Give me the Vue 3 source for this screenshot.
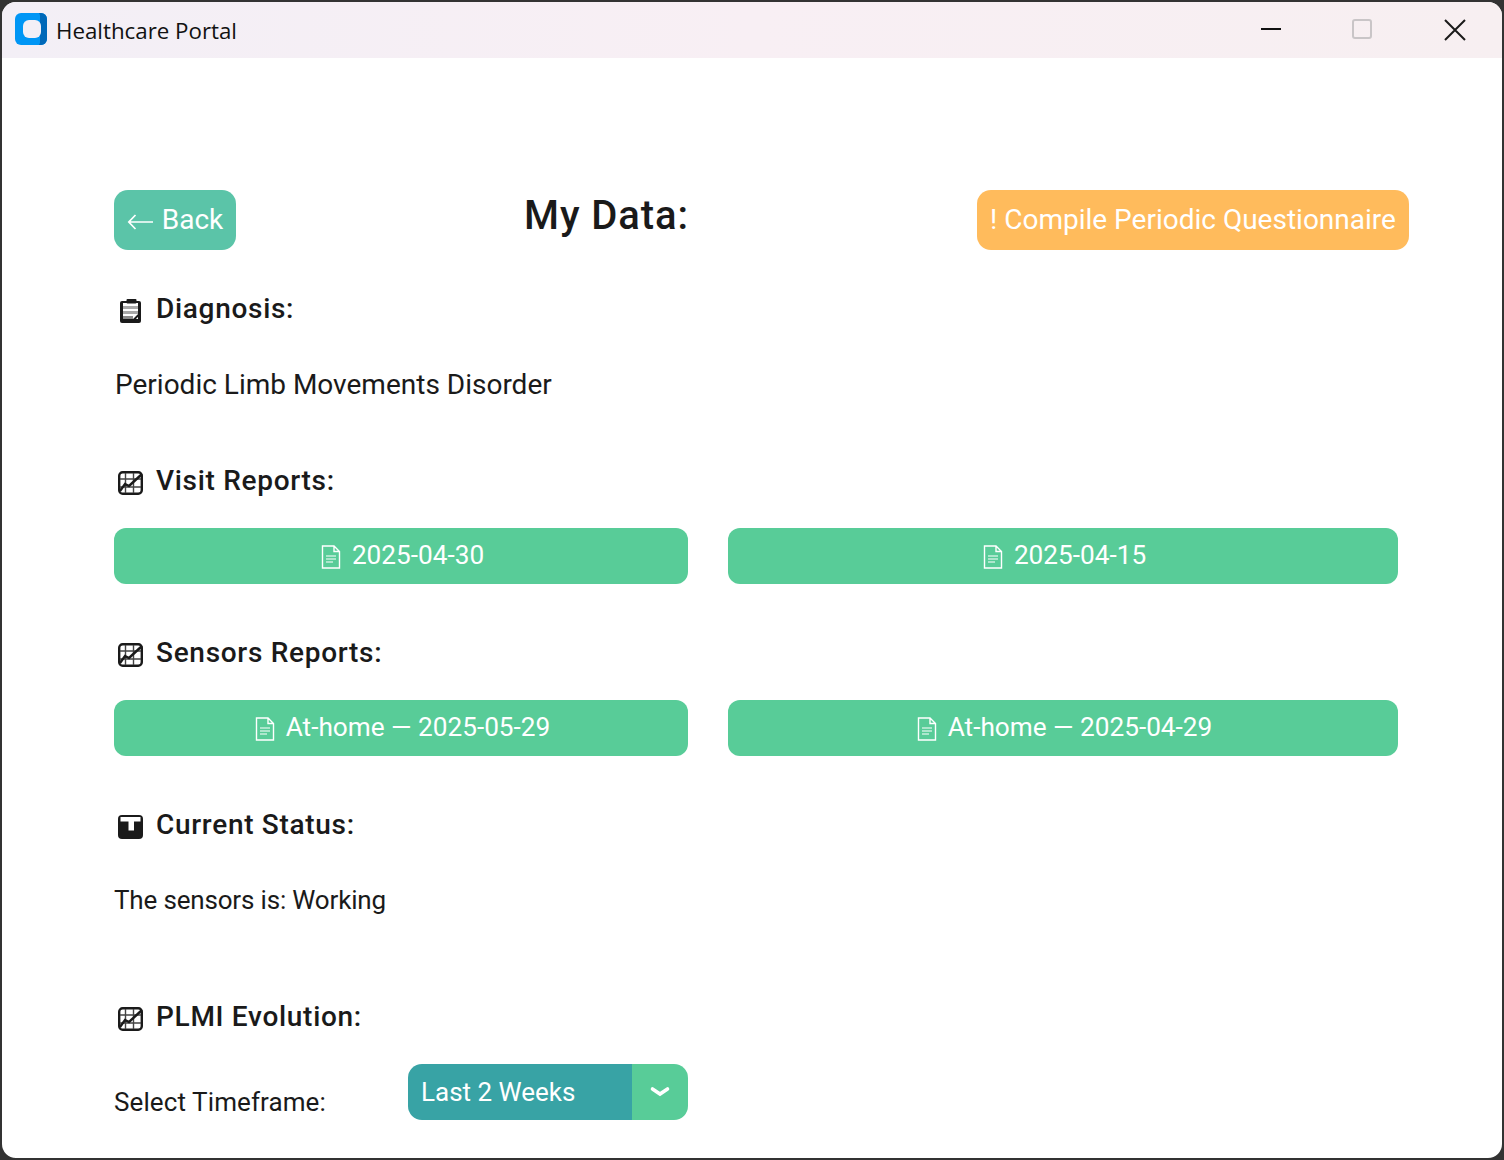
<template>
  <div class="window">
    <div class="titlebar">
      <svg class="logo" width="32" height="32" viewBox="0 0 32 32">
        <rect width="32" height="32" rx="6" fill="#0096f5" />
        <path d="M24 0h2a6 6 0 0 1 6 6v20a6 6 0 0 1-6 6h-2a5 5 0 0 0 1-4V4a5 5 0 0 0-1-4z" fill="#0068b8" />
        <rect x="8" y="7" width="18" height="18" rx="6" fill="#f3eff6" />
      </svg>
      <span class="app-name">Healthcare Portal</span>
      <div class="controls">
        <svg class="ctl-min" width="20" height="20" viewBox="0 0 20 20"><path d="M0 9h20" stroke="#111" stroke-width="2" /></svg>
        <svg class="ctl-max" width="20" height="20" viewBox="0 0 20 20"><rect x="1" y="1" width="18" height="18" rx="2" fill="none" stroke="#c9c5c7" stroke-width="2" /></svg>
        <svg class="ctl-close" width="22" height="22" viewBox="0 0 22 22"><path d="M1 1l20 20M21 1L1 21" stroke="#1a1a1a" stroke-width="2" /></svg>
      </div>
    </div>

    <main class="page">
      <header class="top">
        <button class="back">
          <svg class="arrow" width="26" height="16" viewBox="0 0 26 16"><path d="M26 8H2M8.5 1L1.8 8l6.7 7" fill="none" stroke="#fff" stroke-width="1.7" /></svg>
          Back
        </button>
        <h1>My Data:</h1>
        <button class="compile">! Compile Periodic Questionnaire</button>
      </header>

      <h2 class="first">
        <svg class="icon" viewBox="0 0 25 24">
          <rect x="2" y="2" width="21" height="22" rx="2" fill="#1a1a1a" />
          <rect x="5" y="4" width="15" height="16" fill="#fff" />
          <rect x="5" y="7" width="15" height="3" fill="#a8a8a8" />
          <rect x="5" y="12" width="15" height="3" fill="#a8a8a8" />
          <rect x="5" y="17" width="10" height="3" fill="#8a8a8a" />
          <rect x="8.5" y="0" width="10" height="4.5" rx="1" fill="#1a1a1a" />
          <path d="M15.5 21l5-5" stroke="#1a1a1a" stroke-width="2" />
        </svg>
        Diagnosis:
      </h2>
      <p class="diag">Periodic Limb Movements Disorder</p>

      <h2 class="visit">
        <svg class="icon" viewBox="0 0 25 24">
          <rect x="1.2" y="1.2" width="22.6" height="21.6" rx="3.5" fill="none" stroke="#1a1a1a" stroke-width="2.4" />
          <path d="M7.5 2v20M15.5 2v20M2 8h21M2 16h21" stroke="#444" stroke-width="1.4" />
          <path d="M2 20l5-7 4 2L24 3" fill="none" stroke="#1a1a1a" stroke-width="2.4" />
        </svg>
        Visit Reports:
      </h2>
      <div class="reports">
        <button v-for="r in visits" :key="r" class="report">
          <svg class="doc" viewBox="0 0 20 24"><path d="M1.5 1h11.5l5.5 5.5V23H1.5zM13 1v5.5h5.5" fill="none" stroke="#fff" stroke-width="1.4" /><path d="M5 11h10M5 14h10M5 17h7" stroke="#fff" stroke-width="1.2" /></svg>
          {{ r }}
        </button>
      </div>

      <h2 class="next">
        <svg class="icon" viewBox="0 0 25 24">
          <rect x="1.2" y="1.2" width="22.6" height="21.6" rx="3.5" fill="none" stroke="#1a1a1a" stroke-width="2.4" />
          <path d="M7.5 2v20M15.5 2v20M2 8h21M2 16h21" stroke="#444" stroke-width="1.4" />
          <path d="M2 20l5-7 4 2L24 3" fill="none" stroke="#1a1a1a" stroke-width="2.4" />
        </svg>
        Sensors Reports:
      </h2>
      <div class="reports">
        <button v-for="r in sensors" :key="r" class="report">
          <svg class="doc" viewBox="0 0 20 24"><path d="M1.5 1h11.5l5.5 5.5V23H1.5zM13 1v5.5h5.5" fill="none" stroke="#fff" stroke-width="1.4" /><path d="M5 11h10M5 14h10M5 17h7" stroke="#fff" stroke-width="1.2" /></svg>
          {{ r }}
        </button>
      </div>

      <h2 class="next">
        <svg class="icon" viewBox="0 0 25 24">
          <rect x="0" y="0" width="25" height="24" rx="4" fill="#1a1a1a" />
          <path d="M2.5 2h20v4.5h-6.5v9h-5.500v-9H2.500z" fill="#fff" />
        </svg>
        Current Status:
      </h2>
      <p class="status">The sensors is: Working</p>

      <h2 class="plmi">
        <svg class="icon" viewBox="0 0 25 24">
          <rect x="1.2" y="1.2" width="22.6" height="21.6" rx="3.5" fill="none" stroke="#1a1a1a" stroke-width="2.4" />
          <path d="M7.5 2v20M15.5 2v20M2 8h21M2 16h21" stroke="#444" stroke-width="1.4" />
          <path d="M2 20l5-7 4 2L24 3" fill="none" stroke="#1a1a1a" stroke-width="2.4" />
        </svg>
        PLMI Evolution:
      </h2>
      <div class="timeframe">
        <label>Select Timeframe:</label>
        <div class="select">
          <span class="value">Last 2 Weeks</span>
          <span class="caret">
            <svg width="20" height="12" viewBox="0 0 20 12"><path d="M2.5 3L10 8 17.5 3" fill="none" stroke="#fff" stroke-width="3.6" stroke-linecap="round" /></svg>
          </span>
        </div>
      </div>
    </main>
  </div>
</template>

<script setup>
const visits = ['2025-04-30', '2025-04-15'];
const sensors = ['At-home — 2025-05-29', 'At-home — 2025-04-29'];
</script>

<style>
html, body {
  margin: 0;
  background: #333;
}
</style>

<style scoped>
* {
  box-sizing: border-box;
}
.window {
  width: 1504px;
  height: 1160px;
  border: 2px solid #333;
  border-radius: 16px;
  background: #fff;
  overflow: hidden;
  font-family: Roboto, "Liberation Sans", sans-serif;
  color: #1a1a1a;
}
.titlebar {
  height: 56px;
  display: flex;
  align-items: center;
  background: linear-gradient(90deg, #f3eff6 0%, #f8eff4 50%, #f7eff1 100%);
}
.logo {
  margin: -2px 0 0 13px;
}
.app-name {
  margin-left: 9px;
  font-family: "Open Sans", "Noto Sans", sans-serif;
  font-size: 22.3px;
  color: #111;
}
.controls {
  margin-left: auto;
  display: flex;
  align-items: center;
}
.ctl-min {
  margin-right: 71px;
}
.ctl-max {
  margin: -2px 72px 0 0;
}
.ctl-close {
  margin-right: 36px;
}
.page {
  padding: 132px 93px 0 112px;
}
.top {
  height: 60px;
  display: flex;
  justify-content: space-between;
  align-items: flex-start;
}
button {
  border: 0;
  color: #fff;
  font-family: inherit;
  font-size: 28px;
  padding: 0 0 2px;
}
.back {
  width: 122px;
  height: 60px;
  border-radius: 14px;
  background: #5bc4a8;
  display: flex;
  align-items: center;
  justify-content: center;
  gap: 9px;
}
.arrow {
  margin-top: 6px;
}
.compile {
  width: 432px;
  height: 60px;
  border-radius: 14px;
  background: #ffbb5c;
}
h1 {
  margin: 0;
  font-size: 40px;
  line-height: 52px;
  font-weight: 500;
  letter-spacing: 0.9px;
}
h2 {
  margin: 0;
  height: 40px;
  display: flex;
  align-items: center;
  font-size: 28px;
  font-weight: 500;
  letter-spacing: 0.7px;
}
.icon {
  width: 25px;
  height: 24px;
  margin: 6px 13px 0 4px;
  flex: none;
}
.first {
  margin-top: 38px;
}
.visit {
  margin-top: 56px;
}
.next {
  margin-top: 48px;
}
.plmi {
  margin-top: 76px;
}
p {
  margin: 37px 0 0;
  height: 39px;
  line-height: 40px;
  font-size: 28px;
}
.diag {
  padding-left: 1px;
}
.status {
  font-size: 26px;
  line-height: 38px;
  letter-spacing: -0.17px;
}
.reports {
  margin-top: 28px;
  display: grid;
  grid-template-columns: 574px 670px;
  gap: 40px;
}
.report {
  height: 56px;
  padding-left: 3px;
  border-radius: 12px;
  background: #58cc98;
  font-size: 26.2px;
  display: flex;
  align-items: center;
  justify-content: center;
  gap: 11px;
}
.doc {
  width: 20px;
  height: 24px;
  margin-top: 4px;
}
.timeframe {
  margin-top: 28px;
  display: flex;
  width: 574px;
  justify-content: space-between;
}
label {
  margin-top: 20px;
  line-height: 36px;
  font-size: 26px;
  letter-spacing: 0.1px;
}
.select {
  width: 280px;
  height: 56px;
  border-radius: 14px;
  overflow: hidden;
  display: flex;
  color: #fff;
  font-size: 26px;
}
.value {
  flex: 1;
  background: #38a3a5;
  padding-left: 13px;
  line-height: 57px;
}
.caret {
  width: 56px;
  background: #58cc98;
  display: flex;
  align-items: center;
  justify-content: center;
}
</style>
